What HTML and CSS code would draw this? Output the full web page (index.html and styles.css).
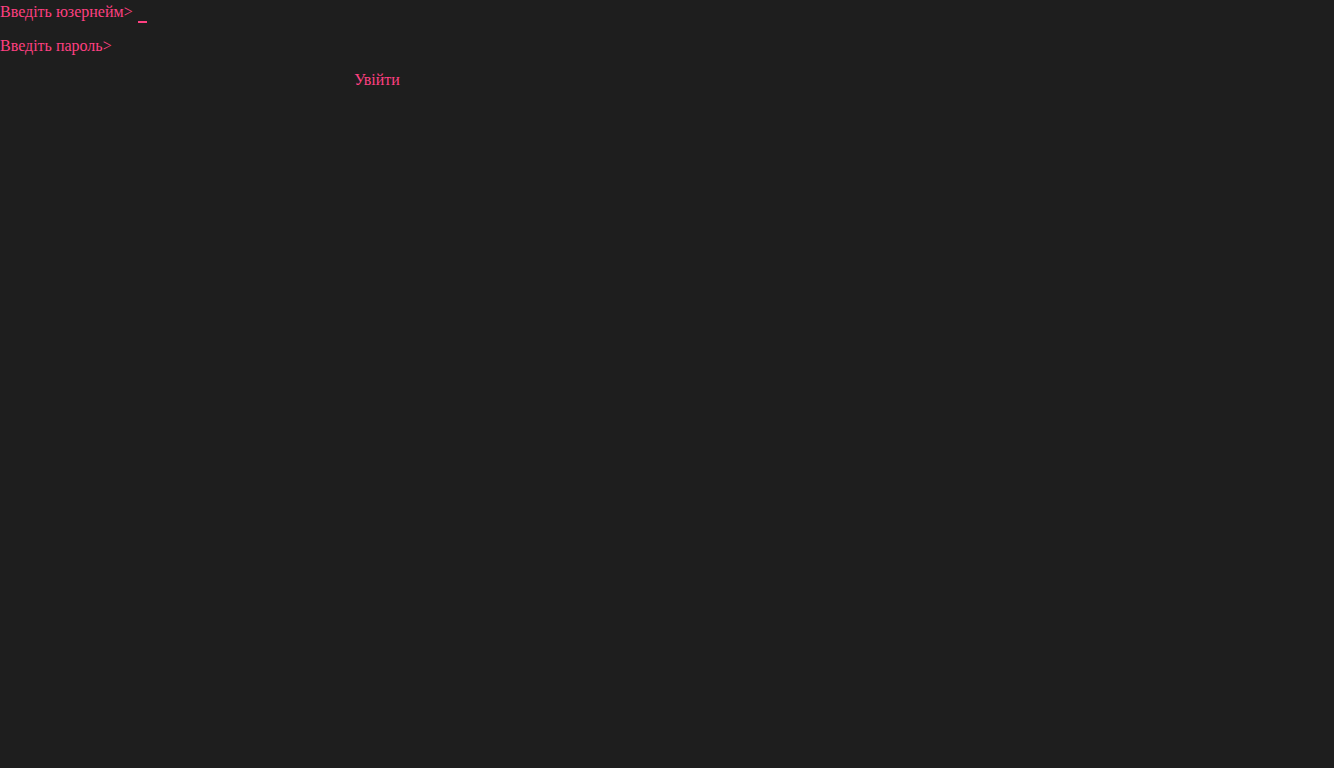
FILE: index.html
```html
<!DOCTYPE html>
<html lang="uk">
<head>
<meta charset="utf-8">
<title>Вхід</title>
<link rel="stylesheet" href="styles.css">
</head>
<body>
<form class="login">
  <div class="row">
    <span class="prompt">Введіть юзернейм&gt;</span>
    <span class="cursor"></span>
  </div>
  <div class="row">
    <span class="prompt">Введіть пароль&gt;</span>
  </div>
  <div class="actions">
    <span class="submit">Увійти</span>
  </div>
</form>
</body>
</html>
```

FILE: styles.css
```css
html, body {
  margin: 0;
  padding: 0;
  background: #1e1e1e;
  height: 100%;
}
body {
  font-family: "Liberation Serif", "Times New Roman", serif;
  font-size: 16px;
  color: #ff4081;
}
.login {
  display: flex;
  flex-direction: column;
  gap: 16px;
  width: 754px;
  padding-top: 3px;
}
.row {
  display: flex;
  align-items: flex-start;
  height: 18px;
  line-height: 18px;
}
.cursor {
  display: inline-block;
  width: 9px;
  height: 2px;
  margin-left: 5px;
  margin-top: 18px;
  background: #ff4081;
}
.actions {
  display: flex;
  justify-content: center;
  line-height: 18px;
}
.submit {
  color: #ff4081;
}
```
